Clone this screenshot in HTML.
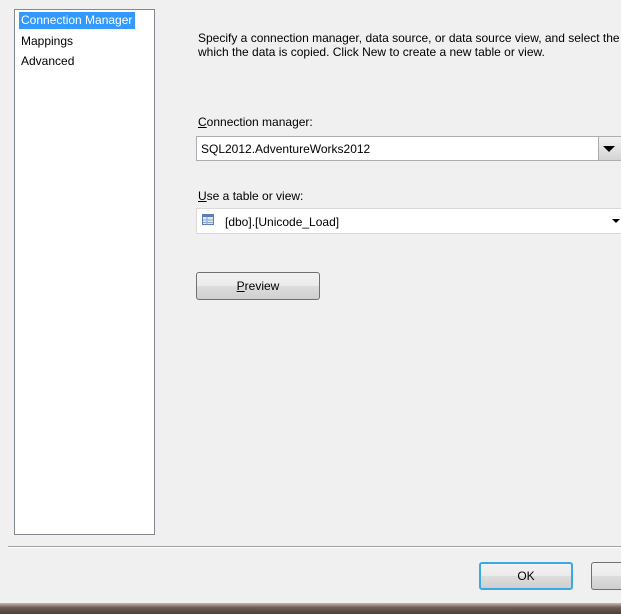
<!DOCTYPE html><html><head><style>
html,body{margin:0;width:621px;height:614px;overflow:hidden}
body{background:#f0f0f0;font-family:"Liberation Sans",sans-serif;font-size:12px;color:#000;position:relative}
.a{position:absolute}
u{text-decoration:underline}
.btn{position:absolute;border:1px solid #707070;border-radius:3px;background:linear-gradient(#f2f2f2 0%,#ebebeb 50%,#dddddd 51%,#cfcfcf 100%);text-align:center;box-sizing:border-box}
</style></head><body>
<div class="a" style="left:14px;top:9px;width:141px;height:526px;background:#fff;border:1px solid #828790;box-sizing:border-box"></div>
<div class="a" style="left:19px;top:12px;width:116px;height:17px;background:#3399ff"></div>
<div class="a" style="left:21px;top:13px;color:#fff">Connection Manager</div>
<div class="a" style="left:21px;top:34px">Mappings</div>
<div class="a" style="left:21px;top:54px">Advanced</div>
<div class="a" style="left:198px;top:31px;width:423px;overflow:hidden;white-space:nowrap">Specify a connection manager, data source, or data source view, and select the table or view from<br>which the data is copied. Click New to create a new table or view.</div>
<div class="a" style="left:198px;top:115px"><u>C</u>onnection manager:</div>
<div class="a" style="left:196px;top:136px;width:425px;height:25px;background:#fff;border:1px solid #abadb3;border-right:none;box-sizing:border-box"></div>
<div class="a" style="left:201px;top:142px">SQL2012.AdventureWorks2012</div>
<div class="a" style="left:598px;top:137px;width:23px;height:23px;background:linear-gradient(#f2f2f2,#d4d4d4);border-left:1px solid #aaa;box-sizing:border-box"></div>
<div class="a" style="left:603px;top:146px;width:0;height:0;border-left:6px solid transparent;border-right:6px solid transparent;border-top:6px solid #000"></div>
<div class="a" style="left:198px;top:189px"><u>U</u>se a table or view:</div>
<div class="a" style="left:196px;top:208px;width:425px;height:26px;background:#fff;border:1px solid #dadada;border-right:none;box-sizing:border-box"></div>
<svg class="a" style="left:202px;top:214px" width="12" height="11"><rect x="0.5" y="0.5" width="11" height="10" fill="#dfe9f5" stroke="#5b7fb5"/><rect x="1" y="1" width="10" height="2" fill="#5b7fb5"/><path d="M1 6H11M1 8.5H11M5 3V10" stroke="#8aa6cf"/></svg>
<div class="a" style="left:225px;top:215px">[dbo].[Unicode_Load]</div>
<div class="a" style="left:612px;top:219px;width:0;height:0;border-left:4px solid transparent;border-right:4px solid transparent;border-top:4px solid #000"></div>
<div class="btn" style="left:196px;top:272px;width:124px;height:28px;line-height:26px"><u>P</u>review</div>
<div class="a" style="left:8px;top:546px;width:613px;height:1px;background:#a0a0a0"></div>
<div class="a" style="left:8px;top:547px;width:613px;height:1px;background:#fff"></div>
<div class="btn" style="left:479px;top:562px;width:94px;height:28px;line-height:24px;border:2px solid #3ca9e3">OK</div>
<div class="btn" style="left:591px;top:562px;width:30px;height:28px;border-right:none;border-radius:3px 0 0 3px"></div>
<div class="a" style="left:0;top:603px;width:621px;height:11px;background:linear-gradient(#c9b9b3,#6f5e55 40%,#4c3e36)"></div>
</body></html>
